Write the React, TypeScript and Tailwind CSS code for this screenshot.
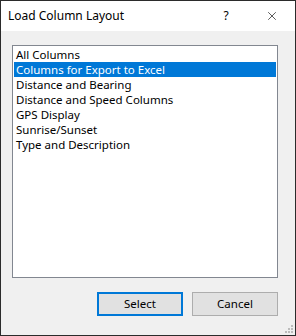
import { X } from 'lucide-react'

const layouts = [
	'All Columns',
	'Columns for Export to Excel',
	'Distance and Bearing',
	'Distance and Speed Columns',
	'GPS Display',
	'Sunrise/Sunset',
	'Type and Description',
]

function ResizeGrip() {
	const dots = [
		[6, 0],
		[3, 3],
		[6, 3],
		[0, 6],
		[3, 6],
		[6, 6],
	]
	return (
		<svg width="8" height="8" className="absolute right-[2px] bottom-[2px]">
			{dots.map(([x, y]) => (
				<rect key={`${x}-${y}`} x={x} y={y} width="2" height="2" fill="#bcbcbc" />
			))}
		</svg>
	)
}

export default function App() {
	const selected = 1

	return (
		<div
			className="w-[296px] h-[336px] border border-[#2b2b2b] flex flex-col text-[11.5px] text-black"
			style={{ fontFamily: '"Noto Sans", "Liberation Sans", sans-serif' }}
		>
			<div className="h-[30px] bg-white flex items-center pl-[7px] text-[12px]">
				<span className="flex-1">Load Column Layout</span>
				<span className="w-[46px] text-center">?</span>
				<span className="w-[46px] flex justify-center">
					<X className="h-[14px] w-[14px]" strokeWidth={1.1} />
				</span>
			</div>

			<div className="relative flex-1 bg-[#f0f0f0] pl-[11px] pr-[17px] pt-[14px]">
				<ul className="h-[233px] bg-white border border-[#828790] px-px pt-px">
					{layouts.map((name, i) => (
						<li
							key={name}
							className={`h-[15px] leading-[15px] pl-[2px] whitespace-nowrap ${
								i === selected ? 'bg-[#0078d7] text-white' : ''
							}`}
						>
							{name}
						</li>
					))}
				</ul>

				<div className="flex justify-end gap-[9px] mt-[14px]">
					<button className="w-[86px] h-[24px] bg-[#e1e1e1] border-2 border-[#0078d7]">
						Select
					</button>
					<button className="w-[86px] h-[24px] bg-[#e1e1e1] border border-[#adadad]">
						Cancel
					</button>
				</div>

				<ResizeGrip />
			</div>
		</div>
	)
}
